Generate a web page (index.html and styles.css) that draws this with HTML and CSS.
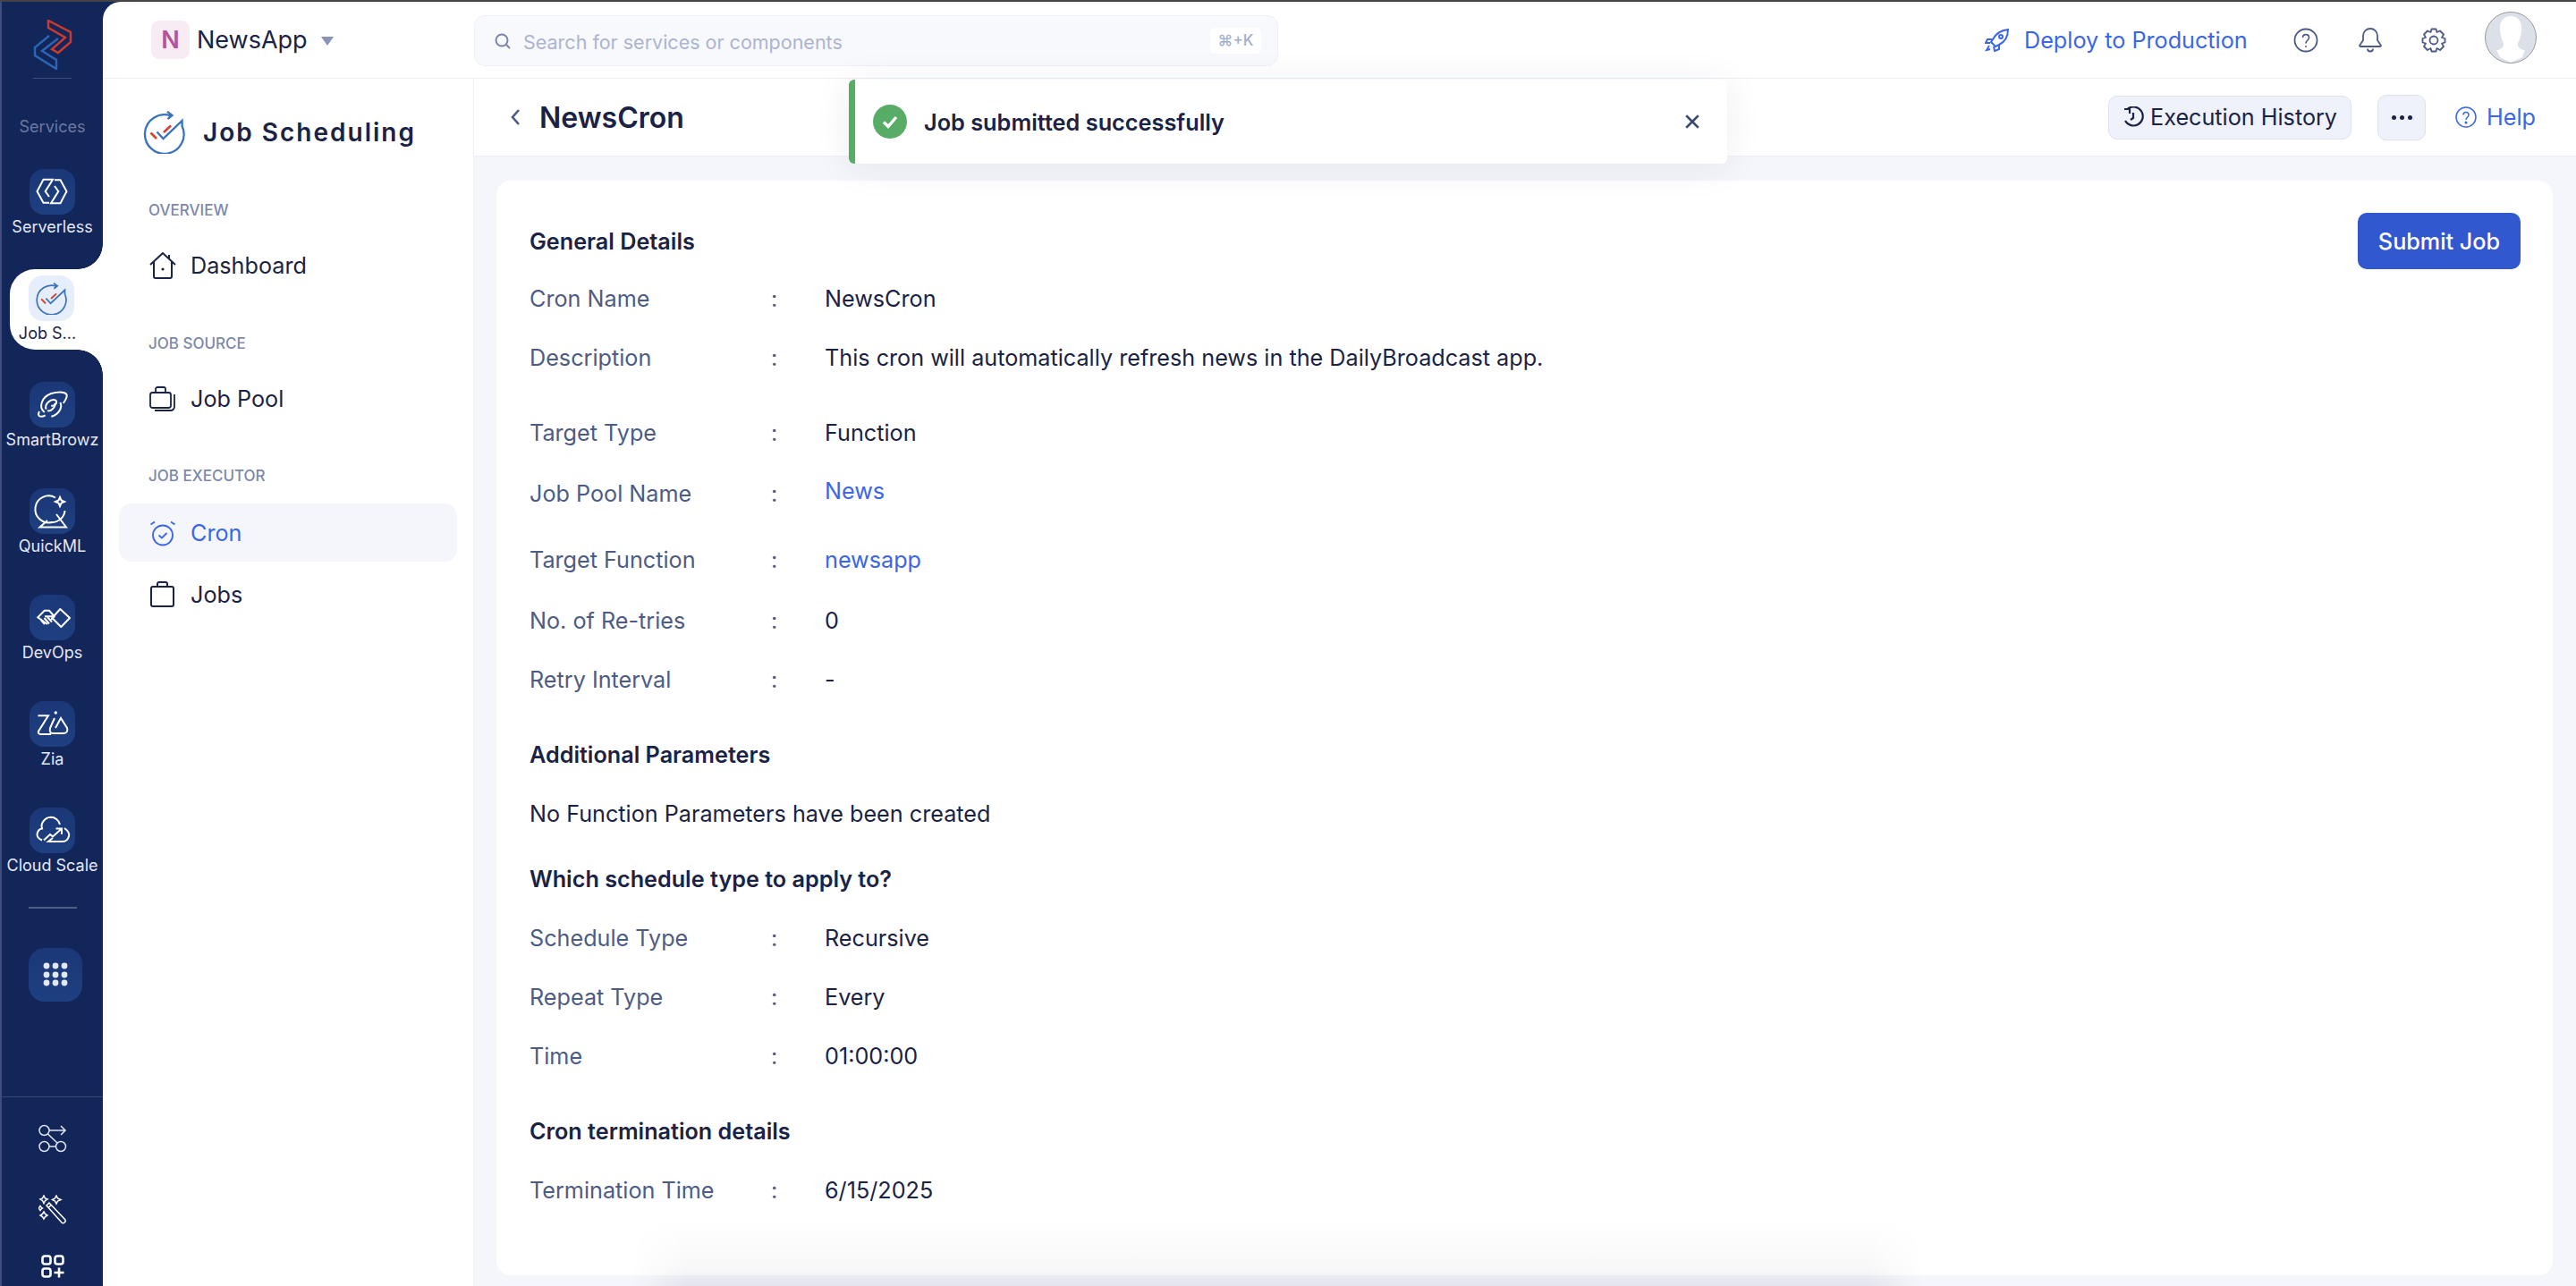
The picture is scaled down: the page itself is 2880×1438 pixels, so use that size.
FILE: index.html
```html
<!DOCTYPE html>
<html>
	<head>
		<meta charset="UTF-8">
		<title>NewsCron</title>
		<link rel="stylesheet" href="styles.css">
	</head>
	<body>
		<svg width="0" height="0" class="defs">
			<symbol id="jobLogo" viewBox="0 0 48 48">
				<path d="M32 5.500A21.800 21.800 0 1 0 44.600 17L44.600 11L23.500 31L16.500 23.500" fill="none" stroke="#3a73bb" stroke-width="2.300"/>
				<path d="M28 .8L33.500 5L28.500 9" fill="none" stroke="#3a73bb" stroke-width="2.300"/>
				<path d="M9.500 24.500L16 31M24 24L32 16.500" fill="none" stroke="#d8412f" stroke-width="2.600"/>
			</symbol>
		</svg>
		<div class="topline"></div>
		<div class="app">
			<aside class="rail">
				<div class="rail-logo">
					<svg width="44" height="56" viewBox="0 0 44 56" fill="none" stroke-width="2.400">
						<path d="M17 1L42 14V25L28 37L21 33L36 20L17 9Z" stroke="#d03a2c"/>
						<path d="M18 18L2 31V40L26 55V45L10 35L28 21" stroke="#2a66b4"/>
					</svg>
				</div>
				<div class="rail-line"></div>
				<div class="rail-title">Services</div>
				<div class="rail-list">
					<div class="rail-item">
						<div class="tile">
							<svg width="43" height="43" viewBox="8 8 43 43" fill="none" stroke="#fff" stroke-width="2">
								<path d="M26 41.700H19.500L12.500 29L19.500 15.700H30L21.700 29L26 35"/>
								<path d="M32 16.300H38.500L45.500 29L38.500 42.300H28L36.300 29L32 23"/>
							</svg>
						</div>
						<span>Serverless</span>
					</div>
					<div class="rail-item active">
						<div class="tile"><svg width="36" height="36"><use href="#jobLogo"/></svg></div>
						<span class="cut">Job S...</span>
					</div>
					<div class="rail-item">
						<div class="tile">
							<svg width="43" height="43" viewBox="8 6 43 43" fill="none" stroke="#fff" stroke-width="2">
								<path d="M20.700 36C13.300 30 18.300 18.300 28.300 15C36.700 12.700 46.700 12.700 45.700 18.300C45 21.700 43.300 24 41.700 26"/>
								<path d="M15 35C12 41 16.700 42 21.700 39.300"/>
								<path d="M22.700 32.700C20 26.700 28.300 20 33.300 22.700C36 25 31.700 30 28.300 28.300"/>
								<path d="M38.300 25C41.700 31.700 35 39.300 28.300 40.700M32 26C34 30 27 36 24 34"/>
							</svg>
						</div>
						<span>SmartBrowz</span>
					</div>
					<div class="rail-item">
						<div class="tile">
							<svg width="51" height="51" viewBox="0 0 51 51" fill="none" stroke="#fff" stroke-width="2">
								<path d="M29 10.500A15 15 0 1 0 25 38C33 38 39 32 39.500 25"/>
								<path d="M34 10L35.500 13.500L39 15L35.500 16.500L34 20L32.500 16.500L29 15L32.500 13.500Z"/>
								<path d="M20 36L11.500 43.500H41L30 29"/>
							</svg>
						</div>
						<span>QuickML</span>
					</div>
					<div class="rail-item">
						<div class="tile">
							<svg width="43" height="43" viewBox="8 8 43 43" fill="none" stroke="#fff" stroke-width="2">
								<path d="M38.300 20L49 30L39.300 40L29.300 30Z" stroke-linejoin="round"/>
								<path d="M24 37L13.300 29.300L20.700 21.700H26L31.700 28.300L28 32M21 28.300H31"/>
								<path d="M17 32.500L21 37M20.500 30L26 36.500M24 29L29 34.500"/>
							</svg>
						</div>
						<span>DevOps</span>
					</div>
					<div class="rail-item">
						<div class="tile">
							<svg width="43" height="43" viewBox="8 7 43 43" fill="none" stroke="#fff" stroke-width="2">
								<path d="M13.500 19.300H25L14 36.700C13 39 15 40 17 40H28"/>
								<path d="M32 22L27 33C26 38 28 39 30 39H42C46 39 47 36 46 33L39 22L33 33"/>
								<circle cx="33.300" cy="16" r="1.700" fill="#fff" stroke="none"/>
							</svg>
						</div>
						<span>Zia</span>
					</div>
					<div class="rail-item">
						<div class="tile">
							<svg width="43" height="43" viewBox="8 9 43 43" fill="none" stroke="#fff" stroke-width="2">
								<path d="M18 41.500C14 40 12.500 37 12.500 35C13 31 15 29 18 28.500C16 23 21 16 28 15.700C32 15.700 37 19 38 24"/>
								<path d="M43 28C47 31 49 34 48 37C47 41 44 43 41 43H25L30 39"/>
								<path d="M20 41.500L27 35L30 37.500L39 29.500M33.500 28.500H40V35"/>
							</svg>
						</div>
						<span>Cloud Scale</span>
					</div>
				</div>
				<div class="rail-sep"></div>
				<div class="tile apps">
					<svg width="28" height="28" viewBox="0 0 28 28" fill="#e3e8f6">
						<circle cx="4" cy="4" r="3.400"/><circle cx="14" cy="4" r="3.400"/><circle cx="24" cy="4" r="3.400"/>
						<circle cx="4" cy="14" r="3.400"/><circle cx="14" cy="14" r="3.400"/><circle cx="24" cy="14" r="3.400"/>
						<circle cx="4" cy="23" r="3.400"/><circle cx="14" cy="23" r="3.400"/><circle cx="24" cy="23" r="3.400"/>
					</svg>
				</div>
				<div class="rail-foot">
					<svg class="foot-flow" width="32" height="32" viewBox="0 0 32 32" fill="none" stroke="#dfe4f3" stroke-width="1.500">
						<circle cx="6.500" cy="7" r="5.500"/><circle cx="6.500" cy="25" r="5.500"/><circle cx="25" cy="25" r="5.500"/>
						<path d="M12 7H30M25 2L30 7L25 12M10.500 11L21 21M12 25H19.500"/>
					</svg>
					<svg class="foot-wand" width="32" height="34" viewBox="0 0 32 34" fill="none" stroke="#fff" stroke-width="1.500">
						<path d="M9 12L12 9L30 28C31 30 28 33 26 31ZM11.500 14L14 11.500"/>
						<path d="M6 1L7.500 4L10 5L7.500 6.500L6 9.500L4.500 6.500L2 5L4.500 4ZM20 1L21.500 4L25 5.500L21.500 7L20 10L18.500 7L15.500 5.500L18.500 4ZM6 19L7.500 21.500L10 23L7.500 24.500L6 27L4.500 24.500L2 23L4.500 21.500ZM2 12.500L3 14L4.500 15L3 16L2 17.500L1 16L0 15L1 14Z"/>
					</svg>
					<svg class="foot-add" width="26" height="26" viewBox="0 0 26 26" fill="none" stroke="#fff" stroke-width="2.600">
						<rect x="1.500" y="1.500" width="9" height="9" rx="2.500"/><rect x="15.500" y="1.500" width="9" height="9" rx="2.500"/><rect x="1.500" y="15.500" width="9" height="9" rx="2.500"/>
						<path d="M20 14.500V25.500M14.500 20H25.500"/>
					</svg>
				</div>
			</aside>
			<div class="shell">
				<header class="topbar">
					<div class="project">
						<div class="project-badge">N</div>
						<span class="project-name">NewsApp</span>
						<span class="caret"></span>
					</div>
					<div class="search">
						<svg width="18" height="18" viewBox="0 0 18 18" fill="none" stroke="#7b84a8" stroke-width="2">
							<circle cx="8" cy="8" r="6.500"/><path d="M12.500 12.500L17 17"/>
						</svg>
						<span class="search-text">Search for services or components</span>
						<span class="kbd">⌘+K</span>
					</div>
					<div class="top-right">
						<a class="deploy">
							<svg width="27" height="26" viewBox="0 0 27 26" fill="none" stroke="#3b66e6" stroke-width="2">
								<path d="M9 12C12 6 18 2 26 1C26 9 22 15 16 18L12 20L7 15ZM9 12H3L1 16L6 16M16 18V23L11 25L10 20"/>
								<circle cx="18" cy="9" r="2"/><path d="M5 19L2 24L6 23"/>
							</svg>
							Deploy to Production
						</a>
						<svg class="ic-help" width="28" height="28" viewBox="0 0 28 28" fill="none" stroke="#4c5a85" stroke-width="1.800">
							<circle cx="14" cy="14" r="12.500"/>
							<path d="M10.500 11C10.500 6.500 17.500 6.500 17.500 11C17.500 14 14 14 14 17.500" stroke-width="1.600"/>
							<circle cx="14" cy="21" r="1" fill="#4c5a85" stroke="none"/>
						</svg>
						<svg class="ic-bell" width="26" height="28" viewBox="0 0 26 28" fill="none" stroke="#4c5a85" stroke-width="1.800">
							<path d="M5 14V9C5 4 9 1 13 1C17 1 21 4 21 9V14L25 20C25 21 24 21 23 21H3C2 21 1 21 1 20ZM10 23.500C10 27.500 16 27.500 16 23.500"/>
						</svg>
						<svg class="ic-gear" width="28" height="28" viewBox="0 0 28 28" fill="none" stroke="#4c5a85" stroke-width="1.800">
							<circle cx="14" cy="14" r="4.500"/>
							<path d="M11.500 1.500H16.500L17.500 5L21 3.500L25 7.500L23 11L26.500 12V16.500L23 17.500L25 21L21 25L17.500 23L16.500 26.500H11.500L10.500 23L7 25L3 21L5 17.500L1.500 16.500V12L5 11L3 7.500L7 3.500L10.500 5Z" stroke-linejoin="round"/>
						</svg>
						<svg class="avatar" width="58" height="58" viewBox="0 0 58 58">
							<circle cx="29" cy="29" r="28.500" fill="#dce0e8" stroke="#999" stroke-width="1"/>
							<path d="M29 5C20 5 16 12 17 22C18 28 19 32 21 35V38C20 41 16 43 13 43L17 51L29 57L42 51L45 43C42 43 38 41 37 38V35C39 32 40 28 41 22C42 12 38 5 29 5Z" fill="#fff"/>
						</svg>
					</div>
				</header>
				<div class="body">
					<nav class="panel">
						<div class="panel-head">
							<svg width="48" height="48"><use href="#jobLogo"/></svg>
							<span>Job Scheduling</span>
						</div>
						<div class="nav-label first">OVERVIEW</div>
						<a class="nav-item">
							<svg width="30" height="30" viewBox="0 0 30 30" fill="none" stroke="#1a2345" stroke-width="2">
								<path d="M1 14L15 1L29 14M5 11V27C5 28 6 29 7 29H23C24 29 25 28 25 27V11M22 3V8"/>
								<circle cx="15" cy="19" r="1.600" fill="#1a2345" stroke="none"/>
							</svg>
							Dashboard
						</a>
						<div class="nav-label">JOB SOURCE</div>
						<a class="nav-item">
							<svg width="30" height="28" viewBox="0 0 30 28" fill="none" stroke="#1a2345" stroke-width="1.800">
								<rect x="1" y="7" width="23" height="17" rx="2.500"/>
								<path d="M7 7V3C7 2 8 1 9 1H16C17 1 18 2 18 3V7M28 9V23C28 25 26 27 24 27H6"/>
							</svg>
							Job Pool
						</a>
						<div class="nav-label exec">JOB EXECUTOR</div>
						<a class="nav-item current">
							<svg width="30" height="30" viewBox="0 0 30 30" fill="none" stroke="#3b66e6" stroke-width="1.800">
								<circle cx="15" cy="17.500" r="11"/>
								<path d="M10.500 17.500L14 20.500L19.500 15M6 2.500L1.500 5.500M24 2.500L28.500 5.500"/>
							</svg>
							Cron
						</a>
						<a class="nav-item near">
							<svg width="30" height="30" viewBox="0 0 30 30" fill="none" stroke="#1a2345" stroke-width="2">
								<rect x="2" y="6" width="25" height="22" rx="2"/>
								<path d="M9 6V3C9 2 10 1 11 1H18C19 1 20 2 20 3V6"/>
							</svg>
							Jobs
						</a>
					</nav>
					<main class="main">
						<div class="subhead">
							<svg class="back" width="12" height="20" viewBox="0 0 12 20" fill="none" stroke="#4c5a85" stroke-width="2.600"><path d="M10 2L3 10L10 18"/></svg>
							<h1>NewsCron</h1>
							<div class="sub-actions">
								<button class="btn-light">
									<svg width="24" height="24" viewBox="0 0 24 24" fill="none" stroke="#1a2345" stroke-width="2.200">
										<path d="M6 2.500A10.500 10.500 0 1 1 3 16M2 3H8V8M12 7V13L9 15"/>
									</svg>
									Execution History
								</button>
								<button class="btn-more"><i></i><i></i><i></i></button>
								<a class="help">
									<svg width="24" height="24" viewBox="0 0 24 24" fill="none" stroke="#3b66e6" stroke-width="1.500">
										<circle cx="12" cy="12" r="11"/>
										<path d="M9 9.500C9 5.500 15 5.500 15 9.500C15 12 12 12 12 15"/><circle cx="12" cy="18" r=".8" fill="#3b66e6"/>
									</svg>
									Help
								</a>
							</div>
						</div>
						<div class="content">
							<section class="card">
								<div class="card-head">
									<h3>General Details</h3>
									<button class="btn-primary">Submit Job</button>
								</div>
								<div class="row first"><span class="key">Cron Name</span><span class="colon">:</span><span class="val">NewsCron</span></div>
								<div class="row"><span class="key">Description</span><span class="colon">:</span><span class="val">This cron will automatically refresh news in the DailyBroadcast app.</span></div>
								<div class="row wide"><span class="key">Target Type</span><span class="colon">:</span><span class="val">Function</span></div>
								<div class="row mid"><span class="key">Job Pool Name</span><span class="colon">:</span><a class="val link raised">News</a></div>
								<div class="row big"><span class="key">Target Function</span><span class="colon">:</span><a class="val link">newsapp</a></div>
								<div class="row mid"><span class="key">No. of Re-tries</span><span class="colon">:</span><span class="val">0</span></div>
								<div class="row"><span class="key">Retry Interval</span><span class="colon">:</span><span class="val">-</span></div>
								<h3 class="title wide">Additional Parameters</h3>
								<div class="row"><span class="val">No Function Parameters have been created</span></div>
								<h3 class="title after">Which schedule type to apply to?</h3>
								<div class="row"><span class="key">Schedule Type</span><span class="colon">:</span><span class="val">Recursive</span></div>
								<div class="row"><span class="key">Repeat Type</span><span class="colon">:</span><span class="val">Every</span></div>
								<div class="row"><span class="key">Time</span><span class="colon">:</span><span class="val">01:00:00</span></div>
								<h3 class="title wide">Cron termination details</h3>
								<div class="row"><span class="key">Termination Time</span><span class="colon">:</span><span class="val">6/15/2025</span></div>
							</section>
						</div>
					</main>
				</div>
			</div>
		</div>
		<div class="toast">
			<svg width="38" height="38" viewBox="0 0 38 38">
				<circle cx="19" cy="19" r="19" fill="#57ad66"/>
				<path d="M12 19.500L17 24.500L26 14" fill="none" stroke="#fff" stroke-width="3.400"/>
			</svg>
			<span class="toast-text">Job submitted successfully</span>
			<svg class="toast-close" width="18" height="18" viewBox="0 0 16 16" fill="none" stroke="#3d4a70" stroke-width="2.200"><path d="M2 2L14 14M14 2L2 14"/></svg>
		</div>
		<div class="drawer-shadow"></div>
	</body>
</html>
```

FILE: styles.css
```css
*{margin: 0;padding: 0;box-sizing: border-box;}
html,body{height: 1438px;overflow: hidden;}
body{position: relative;font-family: Inter, "Noto Sans", sans-serif;color: #1a2345;background: #fff;}
a{text-decoration: none;}
button{font-family: inherit;border: 0;}
.defs{position: absolute;}
.topline{height: 2px;background: #444;}
.app{display: flex;height: 1436px;background: #13265a;}

/* left rail */
.rail{width: 115px;flex: none;border-left: 2px solid #3f4c7c;display: flex;flex-direction: column;align-items: center;color: #e4e8f5;}
.rail-logo{height: 85px;padding-top: 20px;display: flex;justify-content: center;}
.rail-line{width: 43px;height: 1px;background: #3f4c7c;}
.rail-title{height: 20px;margin-top: 44px;line-height: 20px;font-size: 18px;color: #6c789f;}
.rail-list{display: flex;flex-direction: column;gap: 29px;margin-top: 30px;width: 100%;}
.rail-item{position: relative;height: 90px;padding-top: 7px;display: flex;flex-direction: column;align-items: center;font-size: 18px;}
.rail-item span{margin-top: 1px;line-height: 26px;white-space: nowrap;}
.tile{width: 51px;height: 51px;border-radius: 16px;background: linear-gradient(#1b3778,#1e4080);display: flex;align-items: center;justify-content: center;}
.rail-item.active{margin-left: 9px;padding-right: 12px;background: #fff;border-radius: 28px 0 0 28px;color: #1a2345;}
.rail-item.active .tile{background: #e6edfb;}
.rail-item.active .cut{margin-right: 8px;}
.rail-item.active::before,.rail-item.active::after{content: "";position: absolute;right: 0;width: 28px;height: 28px;}
.rail-item.active::before{top: -28px;background: radial-gradient(circle at 0 0,#13265a 27.500px,#fff 28px);}
.rail-item.active::after{bottom: -28px;background: radial-gradient(circle at 0 100%,#13265a 27.500px,#fff 28px);}
.rail-sep{width: 54px;height: 2px;margin-top: 28px;background: #4f5c85;}
.apps{width: 60px;height: 60px;border-radius: 18px;margin: 44px 0 0 7px;flex: none;}
.rail-foot{width: 100%;margin-top: 106px;padding-top: 30px;border-top: 1px solid #3a4877;display: flex;flex-direction: column;align-items: center;}
.foot-wand{margin-top: 47px;}
.foot-add{margin-top: 33px;}

/* right side */
.shell{flex: 1;min-width: 0;background: #fff;border-top-left-radius: 20px;display: flex;flex-direction: column;overflow: hidden;}
.topbar{height: 86px;flex: none;border-bottom: 1px solid #eef0f5;display: flex;align-items: center;}
.project{width: 415px;flex: none;padding-left: 54px;display: flex;align-items: center;}
.project-badge{width: 43px;height: 43px;border-radius: 9px;background: #f8ecf4;color: #b2559c;font-size: 27px;font-weight: 600;text-align: center;line-height: 43px;}
.project-name{margin-left: 8px;font-size: 27px;}
.caret{margin-left: 15px;margin-top: 2px;border-style: solid;border-width: 10px 7.500px 0;border-color: #8a93b8 transparent transparent;}
.search{width: 899px;height: 57px;margin-top: 2px;padding: 0 18px 0 22px;background: #f8f9fd;border: 1px solid #eef0f8;border-radius: 12px;display: flex;align-items: center;}
.search-text{margin: 2px 0 0 14px;font-size: 21.500px;color: #adb4cf;}
.kbd{margin-left: auto;width: 57px;height: 29px;border-radius: 6px;background: #fff;color: #a6adca;font-size: 17px;font-weight: 500;text-align: center;line-height: 29px;}
.top-right{flex: 1;display: flex;align-items: center;}
.deploy{margin-left: 790px;display: flex;align-items: center;gap: 17px;font-size: 25.200px;color: #3b66e6;white-space: nowrap;}
.ic-help{margin-left: 51px;}
.ic-bell{margin-left: 45px;}
.ic-gear{margin-left: 44px;}
.avatar{margin-left: 43px;margin-top: -5px;}

.body{flex: 1;display: flex;min-height: 0;}
.panel{width: 415px;flex: none;border-right: 1px solid #f0f1f6;}
.panel-head{height: 48px;margin: 36px 0 0 44px;display: flex;align-items: center;gap: 20px;font-size: 28px;font-weight: 600;letter-spacing: 2px;white-space: nowrap;}
.nav-label{height: 20px;line-height: 20px;margin: 45px 0 19px 51px;font-size: 17px;font-weight: 500;color: #7d88ab;}
.nav-label.first{margin: 53px 0 19px 51px;}
.nav-label.exec{margin: 44px 0 21px 51px;}
.nav-item{display: flex;align-items: center;gap: 16px;width: 378px;height: 65px;margin-left: 18px;padding-left: 34px;border-radius: 14px;font-size: 25.200px;color: #1a2345;}
.nav-item.current{background: #f5f6fc;color: #3b66e6;}
.nav-item.near{margin-top: 4px;}

.main{flex: 1;min-width: 0;display: flex;flex-direction: column;}
.subhead{height: 87px;flex: none;padding-left: 40px;background: #fff;border-bottom: 1px solid #f0f1f6;display: flex;align-items: center;}
.subhead h1{margin-left: 21px;font-size: 32px;font-weight: 600;}
.sub-actions{margin-left: auto;display: flex;align-items: center;}
.btn-light{width: 272px;height: 49px;border: 1px solid #dde1f0;border-radius: 10px;background: #eff2fa;color: #1a2345;font-size: 25.200px;display: flex;align-items: center;justify-content: center;gap: 7px;white-space: nowrap;}
.btn-more{width: 54px;height: 51px;margin-left: 29px;border: 1px solid #dde1f0;border-radius: 10px;background: #eff2fa;display: flex;align-items: center;justify-content: center;gap: 4px;}
.btn-more i{width: 5px;height: 5px;border-radius: 50%;background: #1a2345;}
.help{margin: 0 45px 0 33px;display: flex;align-items: center;gap: 11px;font-size: 25.200px;color: #3b66e6;}

.content{flex: 1;min-height: 0;padding: 27px 26px 12px 25px;background: #f5f6fb;}
.card{height: 100%;padding: 36px 36px 0 37px;background: #fff;border-radius: 16px;}
.card-head{display: flex;align-items: center;justify-content: space-between;height: 63px;}
h3{font-size: 25.200px;font-weight: 600;line-height: 36px;}
.title.wide{margin-top: 48px;}
.title.after{margin-top: 37px;}
.btn-primary{width: 182px;height: 63px;border-radius: 10px;background: #3258d0;color: #fff;font-size: 25.200px;font-weight: 500;}
.row{display: flex;align-items: center;height: 36px;margin-top: 30px;font-size: 25.200px;}
.row.first{margin-top: 15px;}
.row.wide{margin-top: 48px;}
.row.mid{margin-top: 32px;}
.row.big{margin-top: 38px;}
.key{width: 270px;flex: none;color: #4d5c85;}
.colon{width: 60px;flex: none;color: #4d5c85;}
.val{color: #1a2345;}
.link{color: #3b66e6;}
.link.raised{margin-bottom: 6px;}

/* overlays */
.toast{position: absolute;left: 949px;top: 89px;width: 982px;height: 94px;padding: 0 30px 0 20px;background: #fff;border-left: 7px solid #57ad66;border-radius: 6px;box-shadow: 0 4px 40px rgba(30,40,90,.08);display: flex;align-items: center;}
.toast-text{margin-left: 19px;font-size: 25.300px;font-weight: 600;}
.toast-close{margin-left: auto;}
.drawer-shadow{position: absolute;left: 706px;bottom: 0;width: 1444px;height: 72px;background: linear-gradient(rgba(20,30,70,0),rgba(20,30,70,.02) 50%,rgba(20,30,70,.04) 80%,rgba(20,30,70,.08));-webkit-mask-image: linear-gradient(to right,transparent,#000 60px,#000 calc(100% - 60px),transparent);mask-image: linear-gradient(to right,transparent,#000 60px,#000 calc(100% - 60px),transparent);}
```
